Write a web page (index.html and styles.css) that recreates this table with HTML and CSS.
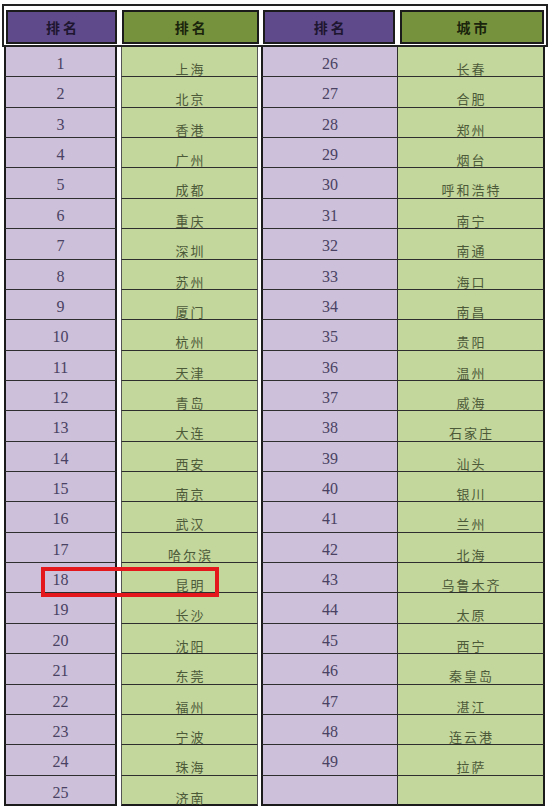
FILE: index.html
```html
<!DOCTYPE html>
<html lang="zh">
<head>
<meta charset="utf-8">
<title>城市排名</title>
<link rel="stylesheet" href="styles.css">
</head>
<body>
<div class="sheet">
  <div class="head">
    <div class="hc purple">排名</div>
    <div class="hc green">排名</div>
    <div class="hc purple">排名</div>
    <div class="hc green">城市</div>
  </div>
  <div class="grid">
    <div class="c n c1">1</div><div class="c t c2">上海</div><div class="c n c3">26</div><div class="c t c4">长春</div>
    <div class="c n c1">2</div><div class="c t c2">北京</div><div class="c n c3">27</div><div class="c t c4">合肥</div>
    <div class="c n c1">3</div><div class="c t c2">香港</div><div class="c n c3">28</div><div class="c t c4">郑州</div>
    <div class="c n c1">4</div><div class="c t c2">广州</div><div class="c n c3">29</div><div class="c t c4">烟台</div>
    <div class="c n c1">5</div><div class="c t c2">成都</div><div class="c n c3">30</div><div class="c t c4">呼和浩特</div>
    <div class="c n c1">6</div><div class="c t c2">重庆</div><div class="c n c3">31</div><div class="c t c4">南宁</div>
    <div class="c n c1">7</div><div class="c t c2">深圳</div><div class="c n c3">32</div><div class="c t c4">南通</div>
    <div class="c n c1">8</div><div class="c t c2">苏州</div><div class="c n c3">33</div><div class="c t c4">海口</div>
    <div class="c n c1">9</div><div class="c t c2">厦门</div><div class="c n c3">34</div><div class="c t c4">南昌</div>
    <div class="c n c1">10</div><div class="c t c2">杭州</div><div class="c n c3">35</div><div class="c t c4">贵阳</div>
    <div class="c n c1">11</div><div class="c t c2">天津</div><div class="c n c3">36</div><div class="c t c4">温州</div>
    <div class="c n c1">12</div><div class="c t c2">青岛</div><div class="c n c3">37</div><div class="c t c4">威海</div>
    <div class="c n c1">13</div><div class="c t c2">大连</div><div class="c n c3">38</div><div class="c t c4">石家庄</div>
    <div class="c n c1">14</div><div class="c t c2">西安</div><div class="c n c3">39</div><div class="c t c4">汕头</div>
    <div class="c n c1">15</div><div class="c t c2">南京</div><div class="c n c3">40</div><div class="c t c4">银川</div>
    <div class="c n c1">16</div><div class="c t c2">武汉</div><div class="c n c3">41</div><div class="c t c4">兰州</div>
    <div class="c n c1">17</div><div class="c t c2">哈尔滨</div><div class="c n c3">42</div><div class="c t c4">北海</div>
    <div class="c n c1">18</div><div class="c t c2">昆明</div><div class="c n c3">43</div><div class="c t c4">乌鲁木齐</div>
    <div class="c n c1">19</div><div class="c t c2">长沙</div><div class="c n c3">44</div><div class="c t c4">太原</div>
    <div class="c n c1">20</div><div class="c t c2">沈阳</div><div class="c n c3">45</div><div class="c t c4">西宁</div>
    <div class="c n c1">21</div><div class="c t c2">东莞</div><div class="c n c3">46</div><div class="c t c4">秦皇岛</div>
    <div class="c n c1">22</div><div class="c t c2">福州</div><div class="c n c3">47</div><div class="c t c4">湛江</div>
    <div class="c n c1">23</div><div class="c t c2">宁波</div><div class="c n c3">48</div><div class="c t c4">连云港</div>
    <div class="c n c1">24</div><div class="c t c2">珠海</div><div class="c n c3">49</div><div class="c t c4">拉萨</div>
    <div class="c n c1 last">25</div><div class="c t c2 last">济南</div><div class="c n c3 last"></div><div class="c t c4 last"></div>
  </div>
  <div class="highlight"></div>
</div>
</body>
</html>
```
FILE: styles.css
```css
html, body {
  margin: 0;
  padding: 0;
  background: #ffffff;
}

.sheet {
  position: relative;
  width: 546px;
  margin: 4px 0 0 2px;
}

.head {
  box-sizing: border-box;
  width: 546px;
  height: 43px;
  border: 2px solid #222;
  padding: 4px 2px 1px 2px;
  display: flex;
  justify-content: space-between;
}

.hc {
  box-sizing: border-box;
  height: 34px;
  border: 2px solid #1b1b1b;
  display: flex;
  align-items: center;
  justify-content: center;
  font-family: "Noto Sans CJK SC", sans-serif;
  font-weight: 700;
  font-size: 14px;
  letter-spacing: 3px;
  text-indent: 3px;
}

.hc:nth-child(1) { width: 111px; }
.hc:nth-child(2) { width: 137px; }
.hc:nth-child(3) { width: 132px; }
.hc:nth-child(4) { width: 144px; }

.hc.purple {
  background: #5f4b8b;
  color: #1e1630;
}

.hc.green {
  background: #76923c;
  color: #1a240c;
}

.grid {
  margin-left: 2px;
  display: grid;
  grid-template-columns: 117px 140px 136px 148px;
  grid-auto-rows: 30.36px;
}

.c {
  box-sizing: border-box;
  border-bottom: 1px solid #2e2e2e;
  text-align: center;
}

.c.last {
  border-bottom: 2px solid #1b1b1b;
}

.n {
  font-family: "Liberation Serif", serif;
  font-size: 16px;
  line-height: 16px;
  padding-top: 9px;
  color: #4a4262;
}

.t {
  font-family: "Noto Sans CJK SC", sans-serif;
  font-size: 13px;
  line-height: 14px;
  padding-top: 15px;
  letter-spacing: 2px;
  text-indent: 2px;
  color: #4c5a39;
}

.c1 {
  background: #ccc0da;
  border-left: 2px solid #1b1b1b;
  border-right: 2px solid #1b1b1b;
  margin-right: 4px;
}

.c2 {
  background: #c3d69b;
  border-left: 1px solid #555;
  border-right: 1px solid #555;
  margin-right: 3px;
}

.c3 {
  background: #ccc0da;
  border-left: 2px solid #1b1b1b;
}

.c4 {
  background: #c3d69b;
  border-left: 1px solid #2e2e2e;
  border-right: 2px solid #1b1b1b;
}

.highlight {
  position: absolute;
  left: 39px;
  top: 563px;
  width: 178px;
  height: 30px;
  border: 4px solid #e3171c;
  box-sizing: border-box;
}
```
